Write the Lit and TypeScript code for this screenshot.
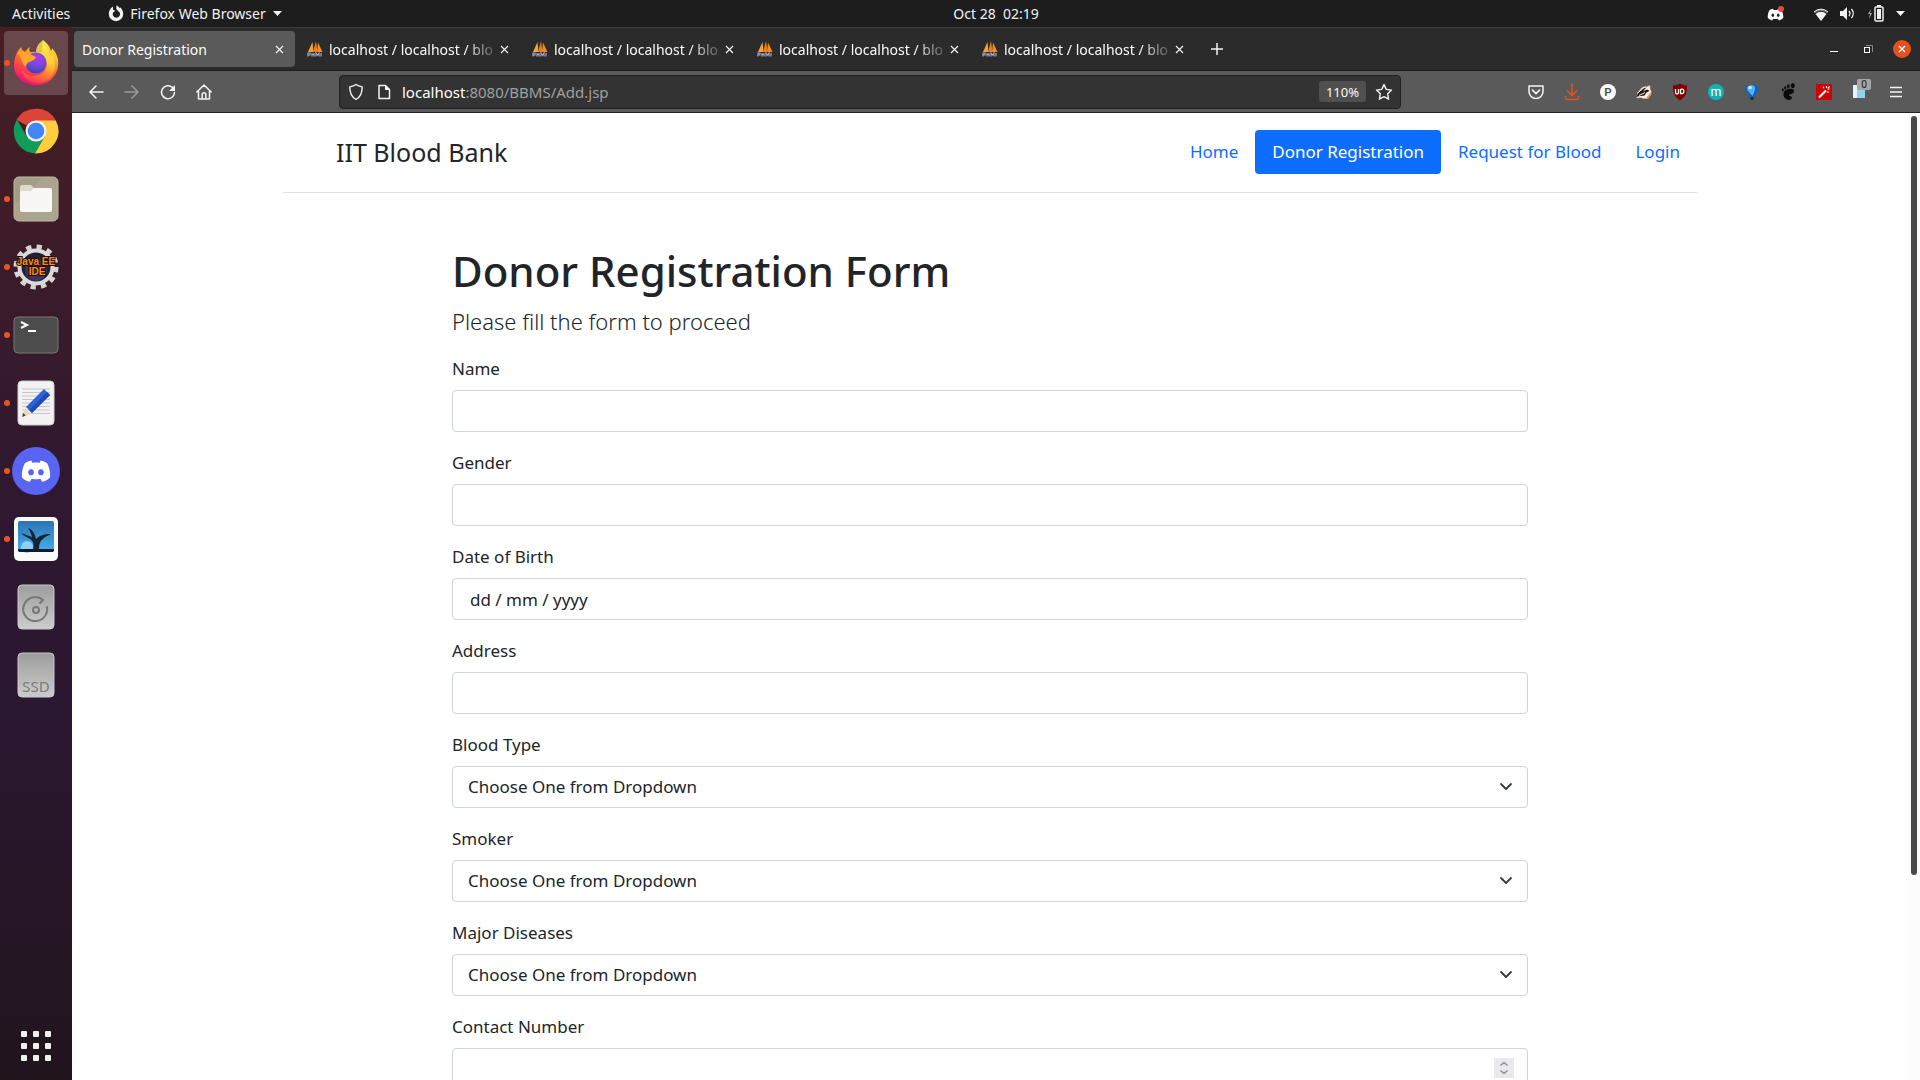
import { LitElement, html, css, svg, nothing } from "lit";
import { customElement } from "lit/decorators.js";
import { classMap } from "lit/directives/class-map.js";

const ic = (body: unknown, w = 20, h = w) =>
  html`<svg width=${w} height=${h} viewBox="0 0 ${w} ${h}" aria-hidden="true">${body}</svg>`;

const discordFace = svg`<path d="M7 3.2C5.2 3.6 3.700 4.200 2.800 5 1.300 8 .7 11 .9 14.200 2.300 15.600 4 16.500 6 17l1.200-2c1.900.5 3.700.5 5.600 0l1.200 2c2-.5 3.700-1.400 5.100-2.800.2-3.200-.4-6.200-1.900-9.200-.9-.8-2.400-1.400-4.200-1.800l-.8 1.600c-1.500-.3-2.900-.3-4.400 0z" fill="#fff"/>`;

/* ---------- launcher icons, each on a 48px canvas ---------- */
const firefoxIcon = svg`
  <defs>
    <linearGradient id="fxBody" x1=".75" y1="0" x2=".3" y2="1">
      <stop offset="0" stop-color="#fff04a"/><stop offset=".3" stop-color="#ffb52b"/>
      <stop offset=".6" stop-color="#ff5a36"/><stop offset="1" stop-color="#f00a78"/>
    </linearGradient>
    <radialGradient id="fxGlobe" cx=".55" cy=".25" r=".8">
      <stop offset="0" stop-color="#b13af0"/><stop offset=".6" stop-color="#6a4bd8"/><stop offset="1" stop-color="#3b3cb0"/>
    </radialGradient>
    <linearGradient id="fxTail" x1=".6" y1="0" x2=".4" y2="1">
      <stop offset="0" stop-color="#fff44f"/><stop offset=".5" stop-color="#ffd53a"/><stop offset="1" stop-color="#ff8a1e" stop-opacity=".3"/>
    </linearGradient>
  </defs>
  <path d="M9 8c1 3 2 4 4 5 1-2 3-4 5-5-1 2-1 4 0 5h12l1-12c5 4 7 7 8 11 1-1 1-2 1-3 5 6 7 11 6 18-1 11-10 19-22 19S2 38 2 26C2 19 5 12 9 8z" fill="url(#fxBody)"/>
  <circle cx="24" cy="24" r="10.500" fill="url(#fxGlobe)"/>
  <path d="M31 1c-4 3-7 7-7 12 6 0 11 5 11 12 0 8-6 12-13 12-5 0-9-2-12-6 1 9 8 13 15 13 11 0 18-8 18-17 0-7-2-10-4-13 0 1 0 2-1 3C37 11 33 6 31 1z" fill="url(#fxTail)" opacity=".8"/>
  <path d="M6 14c3-2 7-2 10 0l8 4c-1 3-4 4-7 5-2 1-3 3-3 5-5-4-4-8-8-14z" fill="#ffa62b"/>`;

const chromeIcon = svg`
  <path d="M24 24 L4.600 12.800 A22.400 22.400 0 0 1 43.400 13 Z" fill="#db4437"/>
  <path d="M24 1.600a22.400 22.400 0 0 1 19.800 12H24z" fill="#db4437"/>
  <path d="M24 24 15 30 5 12.500A22.400 22.400 0 0 0 23 46.400L33 29z" fill="#0f9d58"/>
  <path d="M24 13.600h19.800A22.400 22.400 0 0 1 23 46.400L33 29z" fill="#ffcd40"/>
  <circle cx="24" cy="24" r="10.500" fill="#f1f1f1"/><circle cx="24" cy="24" r="8.300" fill="#4285f4"/>`;

const filesIcon = svg`
  <rect x="2" y="2" width="44" height="44" rx="5" fill="#a39c86" stroke="#c2bca8"/>
  <path d="M3 30 30 3h11a4 4 0 0 1 4 4v34a4 4 0 0 1-4 4H7a4 4 0 0 1-4-4z" fill="#b1aa96" opacity=".6"/>
  <path d="M8 12a2 2 0 0 1 2-2h9l4 4v8H8z" fill="#dedacb"/>
  <path d="M8 18q0-2 2-2h9l3-3h16q2 0 2 2v20q0 2-2 2H10q-2 0-2-2z" fill="#f8f7f5"/>`;

const javaIcon = svg`
  <circle cx="24" cy="24" r="19.500" fill="none" stroke="#d4d4d4" stroke-width="6" stroke-dasharray="5.100 5.110"/>
  <circle cx="24" cy="24" r="16.500" fill="#23202e" stroke="#dadada" stroke-width="4"/>
  <circle cx="24" cy="27" r="11" fill="#3c3160"/>
  <g font-family="Liberation Sans, sans-serif" font-weight="700" font-size="10" text-anchor="middle" fill="#ff8a1c" stroke="#1b0d04" stroke-width="2" paint-order="stroke">
    <text x="24" y="22">Java EE</text><text x="25" y="32">IDE</text></g>`;

const terminalIcon = svg`
  <rect x="2" y="6" width="44" height="36" rx="4" fill="#4d4d4d" stroke="#777"/>
  <path d="M9 11l6 3-6 3M16 20h8" fill="none" stroke="#fff" stroke-width="2"/>`;

const editorIcon = svg`
  <rect x="6" y="2" width="36" height="44" rx="4" fill="#f2f2f2" stroke="#cfcfcf"/>
  <path d="M10 10h28M10 13.500h28M10 17h28M10 20.500h28M10 24h28M10 27.500h28M10 31h28M10 34.500h28" stroke="#c6c6c6"/>
  <path d="M10 38l3-9 6 6z" fill="#f4d3b0"/><path d="M10 38l1.200-4 2.600 2.600z" fill="#444"/>
  <path d="M14 28 32 10l6 6-18 18z" fill="#2e63d8"/><path d="M17 31 35 13l3 3-18 18z" fill="#1f4bb5"/>`;

const discordIcon = svg`<circle cx="24" cy="24" r="24" fill="#5865f2"/>
  <g transform="translate(8.500 8.500) scale(1.550)">${discordFace}<ellipse cx="6.800" cy="10.800" rx="1.800" ry="2" fill="#5865f2"/><ellipse cx="13.200" cy="10.800" rx="1.800" ry="2" fill="#5865f2"/></g>`;

const imageIcon = svg`
  <defs><linearGradient id="sky" x1="0" y1="0" x2="0" y2="1"><stop offset="0" stop-color="#2c74b3"/><stop offset="1" stop-color="#48aef0"/></linearGradient></defs>
  <rect x="2" y="2" width="44" height="44" rx="5" fill="#fafafa"/>
  <rect x="6" y="6" width="36" height="31" rx="2" fill="url(#sky)"/>
  <circle cx="15" cy="32" r="6" fill="#8fd0fa"/>
  <path d="M6 34h36v1a2 2 0 0 1-2 2H8a2 2 0 0 1-2-2z" fill="#0d1b2a"/>
  <path d="M21 35c1-6 1-8-3-11-3-2-6-3-9-6 4 1 7 3 11 4-1-4-2-6-4-9 5 2 7 6 8 11 3-3 7-5 15-5-3 2-5 2-7 4-4 3-5 6-5 12z" fill="#122434"/>`;

const driveBody = svg`
  <defs><linearGradient id="drv" x1="0" y1="0" x2="0" y2="1"><stop offset="0" stop-color="#9d9d9d"/><stop offset="1" stop-color="#cccccc"/></linearGradient></defs>
  <rect x="6" y="2" width="36" height="44" rx="4" fill="url(#drv)" stroke="#c9c9c9"/>`;
const diskIcon = svg`${driveBody}
  <path d="M35 24a12 12 0 1 1-4-7l-3 3" fill="none" stroke="#777" stroke-width="2" stroke-linecap="round"/>
  <circle cx="24" cy="27" r="3" fill="none" stroke="#777" stroke-width="2"/>`;
const ssdIcon = svg`${driveBody}
  <text x="24" y="41" text-anchor="middle" font-family="Noto Sans, sans-serif" font-size="15" fill="#7c7c7c">SSD</text>`;

const launchers = [
  { name: "Firefox", icon: firefoxIcon, running: true, active: true },
  { name: "Chrome", icon: chromeIcon },
  { name: "Files", icon: filesIcon, running: true },
  { name: "Eclipse", icon: javaIcon, running: true },
  { name: "Terminal", icon: terminalIcon, running: true },
  { name: "Text Editor", icon: editorIcon, running: true },
  { name: "Discord", icon: discordIcon, running: true },
  { name: "Image Viewer", icon: imageIcon, running: true },
  { name: "Disk", icon: diskIcon },
  { name: "SSD drive", icon: ssdIcon },
];

/* ---------- browser glyphs, each on a 20px canvas ---------- */
const st = "#f4f4f4";
const back = svg`<path d="M17 10H4M10 4l-6 6 6 6" fill="none" stroke=${st} stroke-width="1.500" stroke-linecap="round" stroke-linejoin="round"/>`;
const forward = svg`<path d="M3 10h13M10 4l6 6-6 6" fill="none" stroke="#9a9a9a" stroke-width="1.500" stroke-linecap="round" stroke-linejoin="round"/>`;
const reload = svg`<path d="M16.500 10.500a6.500 6.500 0 1 1-2-5" fill="none" stroke=${st} stroke-width="1.500" stroke-linecap="round"/><path d="M17 3v6h-6z" fill=${st}/>`;
const home = svg`<path d="M2.800 10 10 3l7.200 7M4.500 9v8h11V9M8.200 17v-4.500a1.800 1.800 0 0 1 3.600 0V17" fill="none" stroke=${st} stroke-width="1.500" stroke-linecap="round" stroke-linejoin="round"/>`;
const shield = svg`<path d="M10 2.500c2 1.500 4 2 6.200 2.400 0 5.500-1 9.600-6.200 12.600C4.800 14.500 3.800 10.400 3.800 4.900 6 4.500 8 4 10 2.500z" fill="none" stroke=${st} stroke-width="1.400" stroke-linejoin="round"/>`;
const pageGlyph = svg`<path d="M5 3.500h6.500L15.500 7.500v9H5z" fill="none" stroke=${st} stroke-width="1.500" stroke-linejoin="round"/><path d="M11 3v5h5z" fill=${st}/>`;
const star = svg`<path d="M10 2.500l2.300 4.900 5.200.7-3.800 3.700.9 5.400L10 14.600l-4.600 2.600.9-5.400L2.500 8.100l5.200-.7z" fill="none" stroke=${st} stroke-width="1.400" stroke-linejoin="round"/>`;
const closeGlyph = svg`<path d="M2 2l7 7M9 2l-7 7" stroke=${st} stroke-width="1.200"/>`;
const plusGlyph = svg`<path d="M10 4v12M4 10h12" stroke=${st} stroke-width="1.500"/>`;
const sailFavicon = svg`<path d="M1 11 5.500 1 6.500 11z" fill="#f7a23b"/><path d="M6 11 9 0l1.500 11z" fill="#e8801d"/><path d="M10 11 11 1.500 15.500 11z" fill="#f58a1f"/><path d="M1 15.500V12h2v2H1.500M5 15.500V12M5 13.500h2V12v3.500M9 15.500V12l1.500 2 1.500-2v3.500M14 12v3.500" stroke="#a9a4cf" stroke-width="1.200" fill="none"/>`;

const extensions = [
  { name: "Pocket", icon: svg`<path d="M3 4h14v5.500a7 7 0 0 1-14 0z" fill="none" stroke=${st} stroke-width="1.500" stroke-linejoin="round"/><path d="M6.500 8.200 10 11.500l3.500-3.300" fill="none" stroke=${st} stroke-width="1.700" stroke-linecap="round"/>` },
  { name: "Downloads", icon: svg`<path d="M10 2v11M5.500 9l4.500 4.500L14.500 9M3.500 14.500v1.500q0 1.500 1.500 1.500h10q1.500 0 1.500-1.500v-1.500" fill="none" stroke="#e5531f" stroke-width="1.500" stroke-linecap="round"/>` },
  { name: "P", icon: svg`<circle cx="10" cy="10" r="8" fill="#fafafa"/><text x="10" y="14" text-anchor="middle" font-family="Liberation Sans, sans-serif" font-weight="700" font-size="11" fill="#555">P</text>` },
  { name: "Privacy Badger", icon: svg`
    <path d="M2 16.500C3 10 6.500 5 11 4l.5-1 2 .5L16 3l1.500 1.500-1 2.500 1.500 3-1 3-3 4H9l-2-1z" fill="#f6efe4" stroke="#6a4a30" stroke-width=".8"/>
    <path d="M2.500 15C4 10.500 7 6.500 12.500 5.500L9 9l4.500-1.500 2 1.500-3 1.500-2 3C8 14 5 13.500 2.500 15z" fill="#1f1a18"/>
    <path d="M3 11.500 9.500 6M5 13.500l6-3" stroke="#f6efe4" stroke-width="1"/>
    <path d="M12.500 15.500 17 10l.5 2.500-3 4z" fill="#d9955a"/><path d="M11 4l2-.5.5 1.500zM15.500 4l1.500.5-.8 1.500z" fill="#1f1a18"/>` },
  { name: "uBlock", icon: svg`<path d="M10 1.500c2.500 1.500 4.500 2 7 2 0 7-1 11-7 15-6-4-7-8-7-15 2.500 0 4.500-.5 7-2z" fill="#800000"/><path d="M5.500 7v3.500a1.400 1.400 0 0 0 3 0V7" fill="none" stroke="#fff" stroke-width="1.300"/><path d="M10.500 7v4.500h1.300a2.200 2.200 0 1 0-1.300-4z" fill="none" stroke="#fff" stroke-width="1.300"/>` },
  { name: "m", icon: svg`<circle cx="10" cy="10" r="8" fill="#0fb5b5"/><text x="10" y="14" text-anchor="middle" font-family="Liberation Sans, sans-serif" font-size="13" fill="#fff">m</text>` },
  { name: "Balloon", icon: svg`<path d="M10 3c4 0 7 1.300 7 3.500 0 2.700-3.500 5-5.200 8.500H8.200C6.500 11.500 3 9.200 3 6.500 3 4.300 6 3 10 3z" fill="#0f62bd"/><path d="M8 3.500c2.500-.5 5 .3 5 2.500 0 3-1.500 6-2.500 8C8.500 11 5 9 5 6.500 5 5 6.500 3.800 8 3.500z" fill="#4db4fa"/><ellipse cx="8" cy="5.500" rx="2" ry="1.500" fill="#c9ecff"/><rect x="8.500" y="15" width="3" height="3" fill="#0a2f63"/>` },
  { name: "GNOME Shell", icon: svg`<path d="M14 7c-4-1-8 1-8.500 4.500C5 15 8 18 11 18c2.500 0 3.500-2 2.500-3.200-1-1-2.500-.3-2.500-1.500 0-1.500 4.500-1 5-3.800C16.200 8 15.500 7.300 14 7z" fill="#0a0a0a"/><ellipse cx="14.800" cy="3.600" rx="2" ry="2.600" fill="#0a0a0a"/><ellipse cx="10.300" cy="4.200" rx="1.300" ry="1.900" fill="#0a0a0a"/><ellipse cx="7.200" cy="5.800" rx="1.100" ry="1.600" fill="#0a0a0a"/><ellipse cx="4.800" cy="8" rx="1" ry="1.400" fill="#0a0a0a"/>` },
  { name: "Magic wand", icon: svg`<rect x="2" y="2" width="16" height="16" fill="#cc0606"/><path d="M5 15.500 12 8.500" stroke="#fff" stroke-width="2.200"/><path d="M12.500 4v2M15.500 7h-2M15.500 4.500 14 6M9 5l1 1M14.500 10.500l-1-1" stroke="#fff" stroke-width="1.100"/>` },
];

const arrowDown = svg`<path d="M1 3h9L5.500 8z" fill="#f2f2f2"/>`;

type Field = { id: string; label: string; kind: "text" | "date" | "select" | "number" };
const fields: Field[] = [
  { id: "name", label: "Name", kind: "text" },
  { id: "gender", label: "Gender", kind: "text" },
  { id: "dob", label: "Date of Birth", kind: "date" },
  { id: "address", label: "Address", kind: "text" },
  { id: "blood", label: "Blood Type", kind: "select" },
  { id: "smoker", label: "Smoker", kind: "select" },
  { id: "diseases", label: "Major Diseases", kind: "select" },
  { id: "contact", label: "Contact Number", kind: "number" },
];

const reset = css`
  :host, * { box-sizing: border-box; }
  svg { display: block; flex: none; }
  button { font: inherit; color: inherit; background: none; border: 0; padding: 0; margin: 0; display: flex; align-items: center; justify-content: center; }
  h1, p { margin: 0; }
`;

@customElement("system-bar")
class SystemBar extends LitElement {
  static styles = [reset, css`
    :host { display: grid; grid-template-columns: 1fr auto 1fr; align-items: center; height: 27px; background: #1d1d1d; color: #f2f2f2; font-size: 14px; }
    .side { display: flex; align-items: center; }
    .left { padding-left: 12px; gap: 38px; }
    .app { gap: 6px; }
    .right { justify-content: flex-end; padding-right: 14px; gap: 10px; }
    .tray { margin-right: 18px; }
    .clock { white-space: pre; padding-right: 2px; }
    .clock-cell { padding-left: 74px; }
  `];
  render() {
    return html`
      <div class="side left">
        <button>Activities</button>
        <button class="app">
          ${ic(svg`<path d="M5 1.500C2 3.500.8 6 .8 9A7.200 7.200 0 0 0 8 16.200 7.200 7.200 0 0 0 15.200 9c0-3-1.400-5.500-3.400-7L12 3.500C10.800 2 9.500 1 8.500.3L8.300 4l3.400 3.400A3.700 3.700 0 1 1 5 7.500L7.300 6 5 4.500z" fill="#f2f2f2"/>`, 16, 17)}
          <span>Firefox Web Browser</span>${ic(arrowDown, 11)}
        </button>
      </div>
      <div class="clock-cell"><span class="clock">Oct 28  02:19</span></div>
      <div class="side right">
        <span class="tray">${ic(svg`<g transform="translate(0 1) scale(.85)">${discordFace}<ellipse cx="6.800" cy="10.800" rx="1.500" ry="2" fill="#222"/><ellipse cx="13.200" cy="10.800" rx="1.500" ry="2" fill="#222"/></g><circle cx="14" cy="4" r="3" fill="#ef4444"/>`, 18)}</span>
        ${ic(svg`<path d="M1.500 6.500a10 10 0 0 1 13 0" fill="none" stroke="#777" stroke-width="2"/><path d="M1 6a10 10 0 0 1 14 0" fill="none" stroke="#f2f2f2"/><path d="M2.500 8a8 8 0 0 1 11 0L8 15z" fill="#f2f2f2"/>`, 16)}
        ${ic(svg`<path d="M1 6h3l4-4v13l-4-4H1z" fill="#f2f2f2"/><path d="M10 6q2 2.500 0 5M12.500 4q3.500 4.500 0 9" stroke="#f2f2f2" stroke-width="1.300" fill="none"/>`, 18, 17)}
        ${ic(svg`<path d="M4 4 1 9h2l-1 5 3-6H3z" fill="#aaa"/><rect x="8" y="2" width="8" height="14" rx="1" fill="none" stroke="#f2f2f2" stroke-width="1.500"/><rect x="10" y="4" width="4" height="10" fill="#f2f2f2"/><path d="M10 1h4" stroke="#f2f2f2" stroke-width="2"/>`, 18)}
        ${ic(arrowDown, 11)}
      </div>`;
  }
}

@customElement("app-dock")
class AppDock extends LitElement {
  static styles = [reset, css`
    :host { display: flex; flex-direction: column; width: 72px; flex: none; padding: 4px 4px 2px; gap: 4px; background: linear-gradient(#481e22 0%, #3a1b2b 25%, #2f1830 45%, #2a1730 65%, #261626 85%, #20141d 100%); }
    .item { position: relative; height: 64px; border-radius: 4px; flex: none; }
    .active { background: #ffffff30; }
    .dot { position: absolute; left: 0; top: 29px; width: 6px; height: 6px; border-radius: 50%; background: #e95420; }
    .apps { margin-top: auto; }
  `];
  render() {
    return html`${launchers.map((l) => html`
      <button class="item ${classMap({ active: !!l.active })}" aria-label=${l.name}>
        ${l.running ? html`<span class="dot"></span>` : nothing}${ic(l.icon, 48)}
      </button>`)}
      <button class="item apps" aria-label="Show applications">
        ${ic(svg`${[3, 15, 27].map((y) => [3, 15, 27].map((x) => svg`<rect x=${x - 3} y=${y - 3} width="6" height="6" rx="1" fill="#efefec"/>`))}`, 30)}
      </button>`;
  }
}

@customElement("browser-chrome")
class BrowserChrome extends LitElement {
  static styles = [reset, css`
    :host { display: block; color: #fafafa; font-size: 14px; }
    .tabs { display: flex; align-items: center; gap: 4px; height: 44px; padding: 0 9px 0 2px; background: #2b2b2b; border-top: 1px solid #3b3b3b; border-bottom: 1px solid #1e1e1e; }
    .tab { display: flex; align-items: center; width: 221px; height: 36px; padding: 0 10px 0 8px; border-radius: 4px; }
    .selected { background: #5a5a5a; }
    .title { flex: 1; min-width: 0; white-space: nowrap; text-align: left; }
    .fade { margin-left: 6px; mask-image: linear-gradient(90deg, #000 136px, transparent 172px); }
    .new { width: 36px; height: 36px; }
    .win { display: flex; align-items: center; gap: 16px; margin-left: auto; }
    .win button { width: 18px; height: 18px; }
    .quit { background: #e5501e; border-radius: 50%; }
    .bar { display: flex; align-items: center; height: 42px; padding: 0 14px; background: #5a5a5a; border-bottom: 1px solid #222; }
    .group { display: flex; align-items: center; gap: 16px; }
    .url { display: flex; align-items: center; flex: 0 1 1062px; height: 34px; margin-left: 125px; padding: 0 6px; gap: 8px; background: #333; border: 1px solid #212121; border-radius: 4px; }
    .address { flex: 1; color: #a0a0a0; font-size: 15px; }
    .host { color: #fff; }
    .zoom { height: 21px; padding: 0 7px; border-radius: 3px; background: #505050; font-size: 13px; }
    .ext { margin-left: auto; }
    .note { position: relative; width: 20px; height: 20px; }
    .badge { position: absolute; left: 7px; top: -3px; width: 14px; height: 11px; background: #a5a5a5; border-radius: 2px; color: #111; font-size: 10px; line-height: 11px; }
  `];
  render() {
    return html`
      <div class="tabs">
        <div class="tab selected"><span class="title">Donor Registration</span><button aria-label="Close tab">${ic(closeGlyph, 11)}</button></div>
        ${[1, 2, 3, 4].map(() => html`<div class="tab">${ic(sailFavicon, 16)}<span class="title fade">localhost / localhost / blo</span><button aria-label="Close tab">${ic(closeGlyph, 11)}</button></div>`)}
        <button class="new" aria-label="New tab">${ic(plusGlyph)}</button>
        <div class="win">
          <button aria-label="Minimize">${ic(svg`<path d="M5 11.500h8" stroke="#fff"/>`, 18)}</button>
          <button aria-label="Restore">${ic(svg`<path d="M7 5.500h6.500V12" fill="none" stroke="#888"/><rect x="5.500" y="7.500" width="5" height="5" fill="none" stroke="#fff"/>`, 18)}</button>
          <button class="quit" aria-label="Close window">${ic(svg`<path d="M6 6l6 6M12 6l-6 6" stroke="#fff" stroke-width="1.400"/>`, 18)}</button>
        </div>
      </div>
      <div class="bar">
        <div class="group">
          <button aria-label="Back">${ic(back)}</button><button aria-label="Forward">${ic(forward)}</button>
          <button aria-label="Reload">${ic(reload)}</button><button aria-label="Home">${ic(home)}</button>
        </div>
        <div class="url">
          ${ic(shield)}${ic(pageGlyph)}
          <span class="address"><span class="host">localhost</span>:8080/BBMS/Add.jsp</span>
          <button class="zoom">110%</button>
          <button aria-label="Bookmark">${ic(star)}</button>
        </div>
        <div class="group ext">
          ${extensions.map((e) => html`<button aria-label=${e.name}>${ic(e.icon)}</button>`)}
          <button class="note" aria-label="Notes">${ic(svg`<rect x="3" y="3" width="12" height="13" fill="#e8f4fb"/><rect x="7" y="5" width="8" height="11" fill="#8fd3ee"/>`)}<span class="badge">0</span></button>
          <button aria-label="Menu">${ic(svg`<path d="M4 5.500h12M4 10h12M4 14.500h12" stroke=${st} stroke-width="1.400"/>`)}</button>
        </div>
      </div>`;
  }
}

@customElement("donor-page")
class DonorPage extends LitElement {
  static styles = [reset, css`
    :host { display: flex; flex: 1; min-height: 0; background: #fff; color: #212529; font-size: 17px; line-height: 26px; }
    .view { flex: 1; min-width: 0; overflow: hidden; }
    .header { display: flex; align-items: center; max-width: 1414px; margin: 0 auto; padding: 17px 0 18px 53px; border-bottom: 1px solid #dee2e6; }
    .brand { margin-right: auto; font-size: 25px; line-height: 40px; color: inherit; text-decoration: none; }
    .nav { display: flex; }
    .nav a { padding: 9px 17px; color: #0d6efd; text-decoration: none; border-radius: 4px; white-space: nowrap; }
    .nav .current { background: #0d6efd; color: #fff; }
    .form { max-width: 1076px; margin: 0 auto; padding-top: 52px; }
    .title { font-size: 42px; line-height: 52px; font-weight: 500; }
    .lead { font-size: 22px; line-height: 32px; font-weight: 300; margin: 8px 0 19px; }
    .field { display: flex; flex-direction: column; gap: 8px; margin-bottom: 18px; }
    .box { position: relative; display: flex; }
    .control { width: 100%; height: 42px; margin: 0; padding: 0 15px; border: 1px solid #ced4da; border-radius: 4px; background: #fff; color: inherit; font: inherit; line-height: 26px; appearance: none; outline: 0; }
    .date { padding-left: 17px; }
    .control::placeholder { color: #212529; opacity: 1; }
    .control::-webkit-inner-spin-button { display: none; }
    .chevron { position: absolute; right: 13px; top: 12px; pointer-events: none; }
    .spin { position: absolute; right: 14px; top: 10px; width: 20px; height: 20px; background: #e9e9ed; }
    .track { width: 12px; flex: none; padding: 3px; background: #fcfcfc; }
    .thumb { width: 6px; height: 79%; border-radius: 3px; background: #4a4a4a; }
  `];
  control(f: Field) {
    if (f.kind === "select")
      return html`<select class="control" id=${f.id}><option>Choose One from Dropdown</option></select>
        <svg class="chevron" width="18" height="18" viewBox="0 0 18 18"><path d="M4 6l5 5 5-5" fill="none" stroke="#343a40" stroke-width="1.800" stroke-linecap="round" stroke-linejoin="round"/></svg>`;
    if (f.kind === "date") return html`<input class="control date" id=${f.id} type="text" placeholder="dd / mm / yyyy">`;
    if (f.kind === "number")
      return html`<input class="control" id=${f.id} type="number">
        <button class="spin" type="button" aria-label="Step value">${ic(svg`<path d="M6.500 7.500l3.500-3 3.500 3M6.500 12.500l3.500 3 3.500-3" fill="none" stroke="#8f8f9d" stroke-width="1.600"/>`)}</button>`;
    return html`<input class="control" id=${f.id} type="text">`;
  }
  render() {
    return html`
      <div class="view">
        <header class="header">
          <a class="brand" href="#home">IIT Blood Bank</a>
          <nav class="nav"><a href="#home">Home</a><a class="current" href="#donor">Donor Registration</a><a href="#request">Request for Blood</a><a href="#login">Login</a></nav>
        </header>
        <form class="form">
          <h1 class="title">Donor Registration Form</h1>
          <p class="lead">Please fill the form to proceed</p>
          ${fields.map((f) => html`<div class="field"><label for=${f.id}>${f.label}</label><div class="box">${this.control(f)}</div></div>`)}
        </form>
      </div>
      <div class="track"><div class="thumb"></div></div>`;
  }
}

@customElement("app-root")
class AppRoot extends LitElement {
  static styles = css`
    :host { display: flex; flex-direction: column; height: 100vh; overflow: hidden; font-family: "Noto Sans", "Open Sans", sans-serif; }
    .desktop { display: flex; flex: 1; min-height: 0; }
    .window { display: flex; flex-direction: column; flex: 1; min-width: 0; }
  `;
  render() {
    return html`<system-bar></system-bar>
      <div class="desktop"><app-dock></app-dock>
        <div class="window"><browser-chrome></browser-chrome><donor-page></donor-page></div>
      </div>`;
  }
}
